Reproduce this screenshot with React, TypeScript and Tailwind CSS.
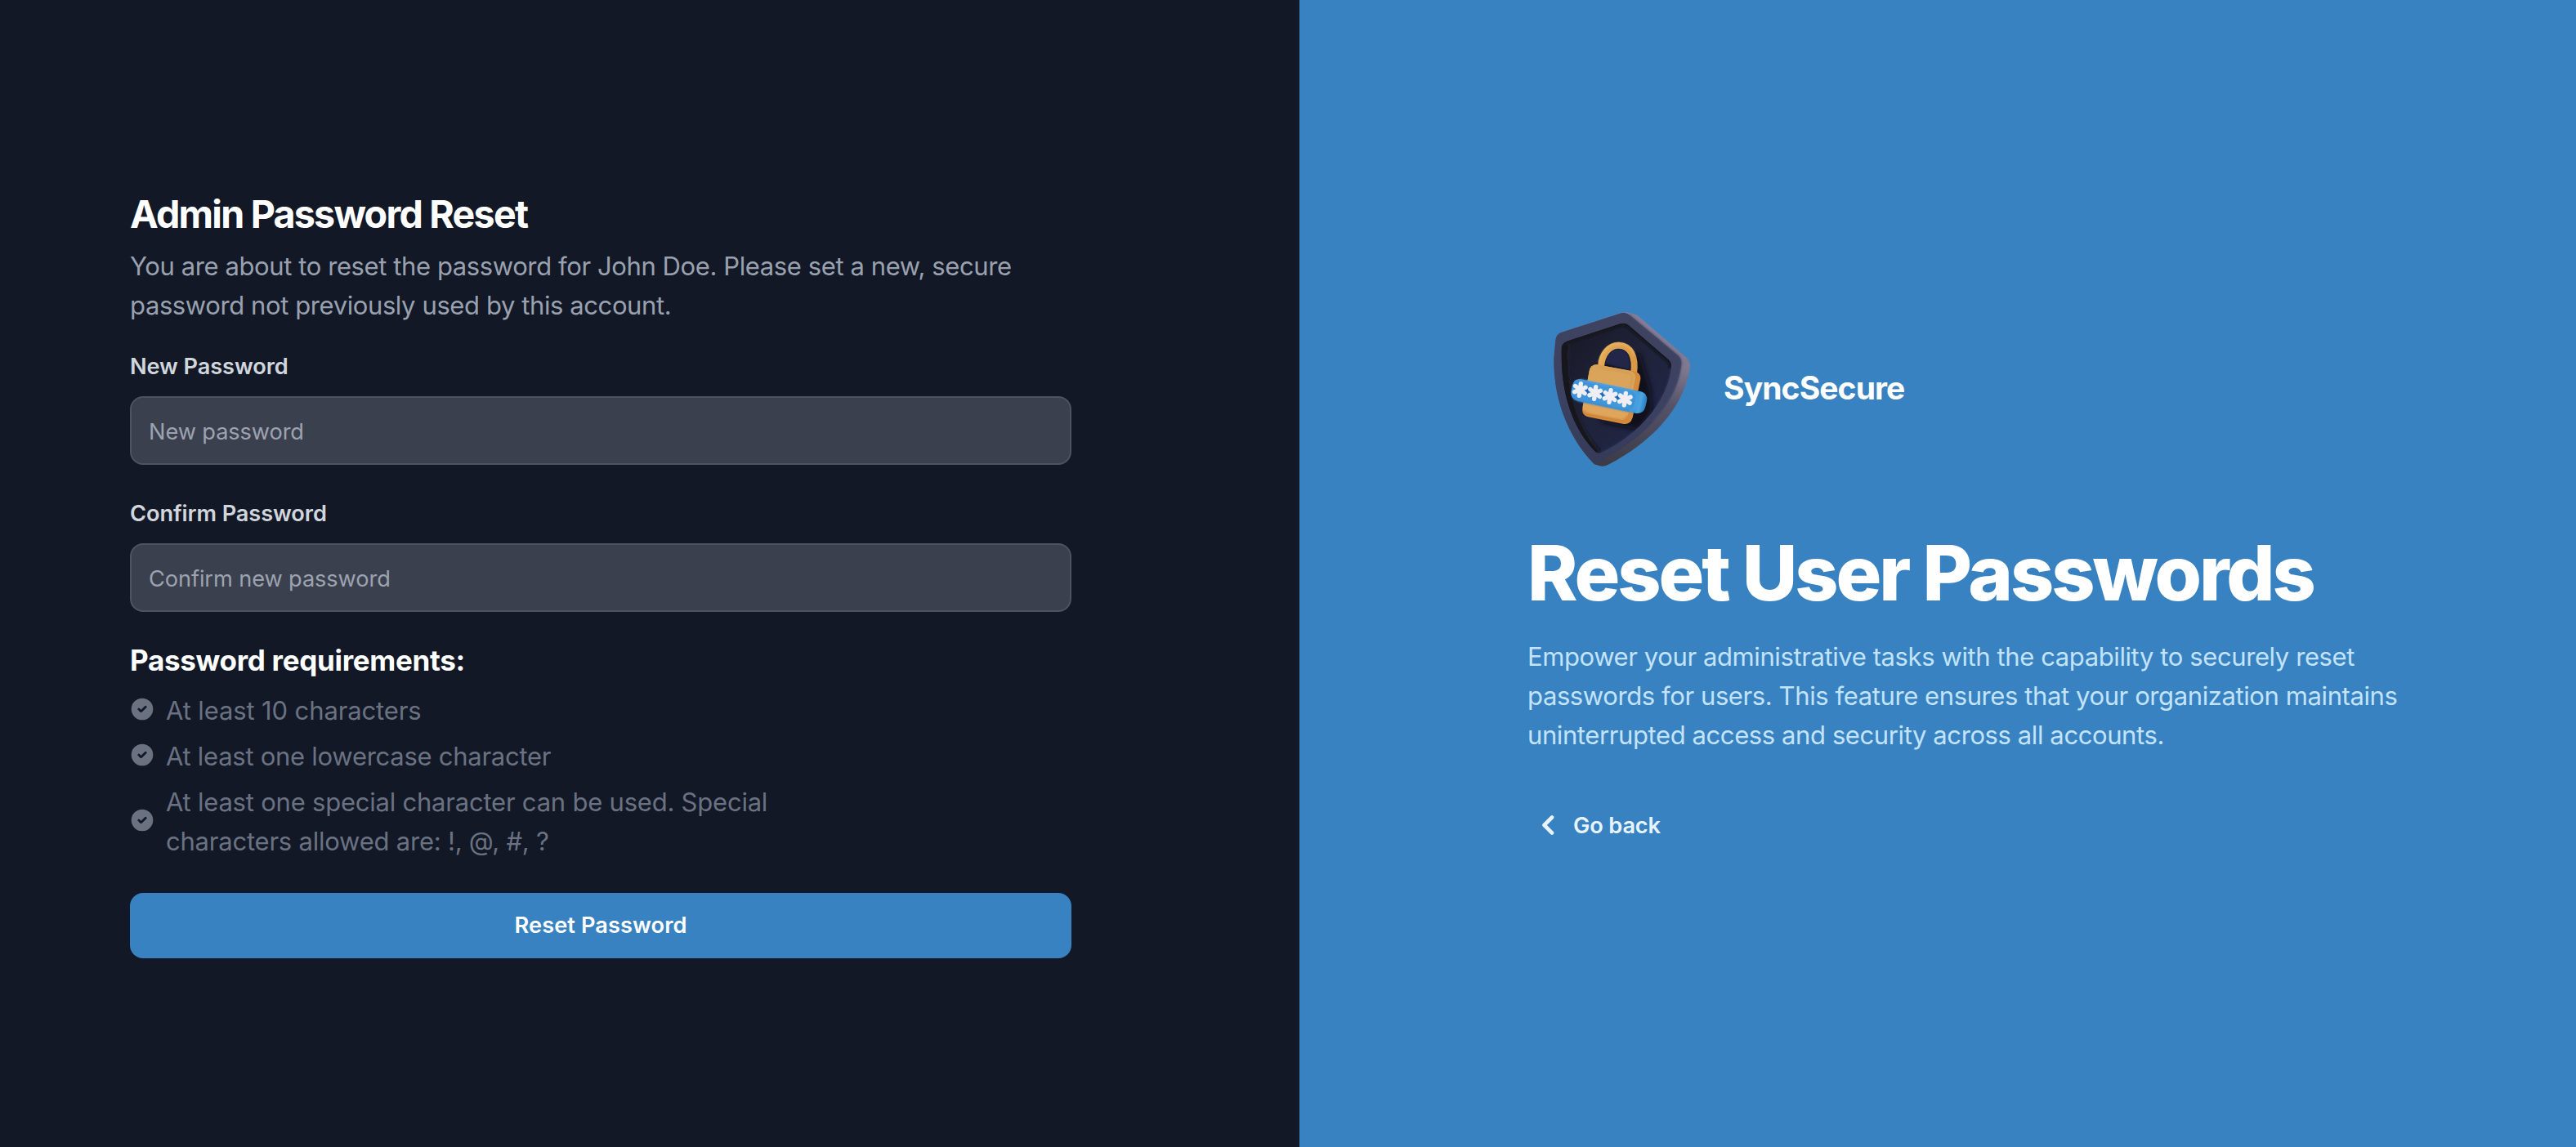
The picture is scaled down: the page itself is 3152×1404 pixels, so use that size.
import type { ReactNode } from 'react'

function Asterisk({ x, y }: { x: number; y: number }) {
  return (
    <g transform={`translate(${x} ${y}) rotate(8)`} stroke="#eeeef4" strokeWidth="16" strokeLinecap="round">
      <path d="M0 -22V22" />
      <path d="M-19 -11L19 11" />
      <path d="M-19 11L19 -11" />
    </g>
  )
}

function ShieldLogo() {
  return (
    <svg className="h-[210px] w-[200px] shrink-0" viewBox="0 0 600 630" fill="none">
      <defs>
        <linearGradient id="side" x1="430" y1="60" x2="330" y2="600" gradientUnits="userSpaceOnUse">
          <stop offset="0" stopColor="#857d98" />
          <stop offset="0.3" stopColor="#7d7890" />
          <stop offset="0.55" stopColor="#555368" />
          <stop offset="1" stopColor="#3c3b47" />
        </linearGradient>
        <linearGradient id="rim" x1="300" y1="40" x2="260" y2="600" gradientUnits="userSpaceOnUse">
          <stop offset="0" stopColor="#3e4360" />
          <stop offset="0.6" stopColor="#3b4161" />
          <stop offset="1" stopColor="#353a58" />
        </linearGradient>
        <linearGradient id="floor" x1="120" y1="150" x2="460" y2="420" gradientUnits="userSpaceOnUse">
          <stop offset="0" stopColor="#191b2a" />
          <stop offset="0.5" stopColor="#1f2238" />
          <stop offset="1" stopColor="#202646" />
        </linearGradient>
        <linearGradient id="body" x1="250" y1="230" x2="240" y2="440" gradientUnits="userSpaceOnUse">
          <stop offset="0" stopColor="#d9a35a" />
          <stop offset="1" stopColor="#e0a65c" />
        </linearGradient>
        <linearGradient id="shackle" x1="225" y1="0" x2="372" y2="0" gradientUnits="userSpaceOnUse">
          <stop offset="0" stopColor="#e5a850" />
          <stop offset="0.5" stopColor="#dda252" />
          <stop offset="1" stopColor="#d99744" />
        </linearGradient>
        <linearGradient id="band" x1="130" y1="310" x2="400" y2="370" gradientUnits="userSpaceOnUse">
          <stop offset="0" stopColor="#3f92d8" />
          <stop offset="0.7" stopColor="#4399dc" />
          <stop offset="0.86" stopColor="#3b93d6" />
          <stop offset="0.93" stopColor="#4ca6e2" />
          <stop offset="1" stopColor="#2f7fc4" />
        </linearGradient>
        <filter id="soft" x="-20%" y="-20%" width="140%" height="140%">
          <feGaussianBlur stdDeviation="9" />
        </filter>
        <filter id="slight" filterUnits="userSpaceOnUse" x="0" y="0" width="600" height="630">
          <feGaussianBlur stdDeviation="2.5" />
        </filter>
        <clipPath id="well">
          <path d="M112 143L308 79Q325 74 338 84L484 210Q498 222 494 242C478 370 370 490 236 552Q224 557 216 548C130 462 88 330 92 170Q93 149 112 143Z" />
        </clipPath>
      </defs>

      <path
        d="M92 110L310 39Q325 34 345 40L370 47L549 202Q566 217 564 238C545 380 430 510 262 597Q246 605 230 600L212 595C110 490 62 350 64 200L70 136Q73 116 92 110Z"
        fill="url(#side)"
      />
      <path
        d="M92 110L310 40Q327 35 341 46L519 194Q535 208 532 230C515 375 395 500 235 583Q218 591 205 582C110 480 60 345 64 200L70 136Q73 116 92 110Z"
        fill="url(#rim)"
      />
      <path d="M341 46L519 194Q535 208 532 230C522 310 480 385 425 440" stroke="#4d4e6a" strokeWidth="4" filter="url(#slight)" />

      <g clipPath="url(#well)">
        <rect width="600" height="630" fill="url(#floor)" />
        <path
          d="M112 143L308 79Q325 74 338 84L484 210Q498 222 494 242"
          stroke="#14151f"
          strokeWidth="20"
          filter="url(#slight)"
        />
        <path d="M100 150C96 330 130 462 222 556" stroke="#15161f" strokeWidth="36" filter="url(#slight)" />
        <path d="M120 150C110 320 148 450 230 548" stroke="#272a3c" strokeWidth="4" filter="url(#slight)" />
        <path d="M494 242C478 370 370 490 236 552" stroke="#262c50" strokeWidth="9" filter="url(#slight)" />
        <path
          d="M250 200L380 190L420 320L425 400L380 470L240 440Z"
          fill="#0b0b12"
          opacity="0.85"
          filter="url(#soft)"
        />
        <path d="M252 226Q262 170 305 172Q348 178 344 250Z" fill="#232849" filter="url(#slight)" />
      </g>

      <path d="M237 236C240 192 266 157 303 158C345 160 366 198 357 262" stroke="url(#shackle)" strokeWidth="24" />
      <path d="M230 222C236 186 262 154 300 152C330 152 350 170 358 194" stroke="#eab96c" strokeWidth="5" filter="url(#slight)" />

      <path d="M222 229L362 254Q384 260 382 282L353 424Q345 450 320 447L190 421Q166 414 169 392L194 252Q199 228 222 229Z" fill="#d58b3c" />
      <path d="M222 229L342 251Q366 257 363 280L336 413Q330 436 308 432L188 409Q167 403 170 382L194 252Q199 228 222 229Z" fill="url(#body)" />
      <path d="M226 237L336 258Q353 263 351 282L344 320" stroke="#cd9249" strokeWidth="3" filter="url(#slight)" />
      <path d="M174 398Q180 408 198 412L306 432Q326 434 334 416" stroke="#c97f35" strokeWidth="4" filter="url(#slight)" />

      <path d="M160 282L384 328Q410 336 405 362L400 384Q393 410 366 408L150 362Q123 354 127 328L132 304Q138 280 160 282Z" fill="url(#band)" />
      <path d="M160 284L350 322Q372 328 368 350L362 380Q356 400 340 400" stroke="#56abe4" strokeWidth="4" filter="url(#slight)" />
      <path d="M135 348Q140 358 156 362L340 400" stroke="#3a86cb" strokeWidth="5" filter="url(#slight)" />

      <g stroke="#1f62b4" strokeWidth="14" strokeLinecap="round" filter="url(#slight)">
        <path d="M186 322V332" />
        <path d="M241 334V344" />
        <path d="M297 346V356" />
      </g>
      <Asterisk x={160} y={321} />
      <Asterisk x={215} y={333} />
      <Asterisk x={270} y={345} />
      <Asterisk x={325} y={356} />
    </svg>
  )
}

function CheckCircle() {
  return (
    <svg className="mb-1 size-7 shrink-0" viewBox="0 0 20 20" fill="currentColor">
      <path d="M10 .5a9.5 9.5 0 1 0 9.5 9.5A9.51 9.51 0 0 0 10 .5Zm3.707 8.207-4 4a1 1 0 0 1-1.414 0l-2-2a1 1 0 0 1 1.414-1.414L9 10.586l3.293-3.293a1 1 0 0 1 1.414 1.414Z" />
    </svg>
  )
}

function Field({ label, placeholder }: { label: string; placeholder: string }) {
  return (
    <label className="block">
      <span className="block text-[27.2px] leading-10 font-semibold tracking-[-0.1px] text-gray-300">{label}</span>
      <input
        type="password"
        placeholder={placeholder}
        className="mt-4 block h-[84px] w-full rounded-2xl border-2 border-[#4d5361] bg-[#3b404f] pt-0.5 pl-[21px] text-[27.2px] tracking-[-0.1px] text-white placeholder:text-[#9ca3af]"
      />
    </label>
  )
}

function Requirement({ className, children }: { className: string; children: ReactNode }) {
  return (
    <li className="flex items-center gap-[15px] pl-px text-[31px] leading-12 text-gray-500">
      <CheckCircle />
      <span className={className}>{children}</span>
    </li>
  )
}

export default function App() {
  return (
    <div className="flex h-[1404px] w-[3152px] overflow-hidden bg-[#121826] font-[Inter,sans-serif]">
      <section className="w-[1590px] shrink-0 pt-[230px] pl-[159px]">
        <form className="w-[1152px]">
          <h2 className="text-[46.6px] leading-16 font-bold tracking-[-1.77px] text-white">Admin Password Reset</h2>
          <p className="mt-2 text-[31px] leading-12 tracking-[-0.4px] text-gray-400">
            You are about to reset the password for John Doe. Please set a new, secure password not previously used by this
            account.
          </p>
          <div className="mt-[31px] flex flex-col gap-10">
            <Field label="New Password" placeholder="New password" />
            <Field label="Confirm Password" placeholder="Confirm new password" />
          </div>
          <h3 className="mt-[31px] text-[35px] leading-14 font-[650] tracking-[-0.3px] text-white">
            Password requirements:
          </h3>
          <ul className="mt-2.5 flex w-[816px] flex-col gap-2">
            <Requirement className="tracking-[-0.12px]">At least 10 characters</Requirement>
            <Requirement className="tracking-[-0.27px]">At least one lowercase character</Requirement>
            <Requirement className="tracking-[-0.22px]">
              At least one special character can be used. Special characters allowed are: !, @, #, ?
            </Requirement>
          </ul>
          <button
            type="button"
            className="mt-[39px] h-20 w-full rounded-2xl bg-[#3882c1] text-[27.2px] font-semibold tracking-[0.08px] text-white"
          >
            Reset Password
          </button>
        </form>
      </section>

      <section className="flex-1 bg-[#3882c1] pt-[370px] pl-[279px]">
        <div className="flex items-center gap-[29px] pl-[11px]">
          <ShieldLogo />
          <span className="text-[39px] leading-14 font-[650] tracking-[-0.9px] text-white">SyncSecure</span>
        </div>
        <h1 className="mt-[73px] text-[93px] leading-24 font-extrabold tracking-[-3.1px] text-white">
          Reset User Passwords
        </h1>
        <p className="mt-[31px] w-[1088px] text-[31px] leading-12 tracking-[-0.4px] text-[#c3e3f8]">
          Empower your administrative tasks with the capability to securely reset passwords for users. This feature ensures
          that your organization maintains uninterrupted access and security across all accounts.
        </p>
        <button type="button" className="mt-[63px] flex h-12 items-center gap-[22px] pl-[16px] text-[#e8f4fd]">
          <svg className="mb-0.5 h-[26px] w-[18px]" viewBox="0 0 18 26" fill="none">
            <path
              d="M14 3.5L4.5 13L14 22.5"
              stroke="currentColor"
              strokeWidth="4.6"
              strokeLinecap="round"
              strokeLinejoin="round"
            />
          </svg>
          <span className="text-[27.2px] leading-12 font-semibold tracking-[-0.15px]">Go back</span>
        </button>
      </section>
    </div>
  )
}
